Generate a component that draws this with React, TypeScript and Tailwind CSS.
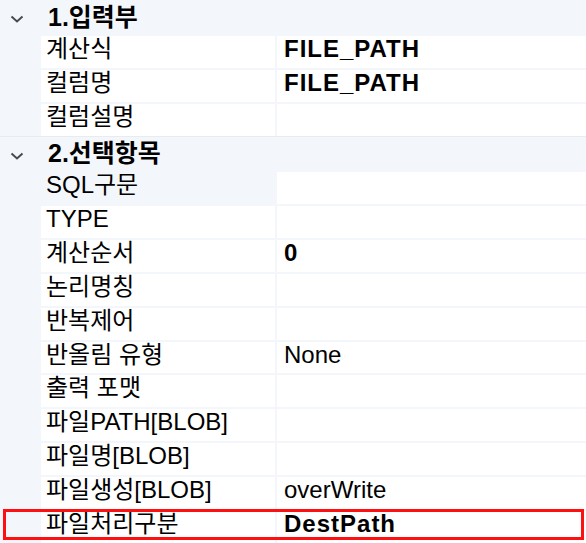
import React from "react";

type Row = { label: string; value?: string; bold?: boolean; dimLabel?: boolean; h?: string };

const groupOne: Row[] = [
  { label: "계산식", value: "FILE_PATH", bold: true },
  { label: "컬럼명", value: "FILE_PATH", bold: true },
  { label: "컬럼설명" },
];

const groupTwo: Row[] = [
  { label: "SQL구문", dimLabel: true },
  { label: "TYPE" },
  { label: "계산순서", value: "0", bold: true },
  { label: "논리명칭" },
  { label: "반복제어" },
  { label: "반올림 유형", value: "None", h: "h-[31px]" },
  { label: "출력 포맷" },
  { label: "파일PATH[BLOB]" },
  { label: "파일명[BLOB]" },
  { label: "파일생성[BLOB]", value: "overWrite" },
  { label: "파일처리구분", value: "DestPath", bold: true },
];

const font = { fontFamily: '"Liberation Sans", "Noto Sans CJK KR", sans-serif' };

function Chevron() {
  return (
    <svg width="16" height="10" viewBox="0 0 16 10" className="ml-[9px]">
      <path d="M2.5 2.5 L8 7.5 L13.5 2.5" fill="none" stroke="#4a4a4a" strokeWidth="2" />
    </svg>
  );
}

function GroupHeader({ title, className }: { title: string; className: string }) {
  return (
    <div className={`flex items-center ${className}`}>
      <div className="flex w-[41px] items-center pt-[2px]">
        <Chevron />
      </div>
      <span className="-mt-[3px] pl-[7px] text-[25px] font-bold leading-[26px] text-black">{title}</span>
    </div>
  );
}

function PropRow({ row }: { row: Row }) {
  return (
    <div className={`flex ${row.h ?? "h-[32px]"}`}>
      <div className="w-[41px] shrink-0" />
      <div
        className={`mr-[2px] w-[234px] shrink-0 pl-[5px] text-[24px] leading-[26px] text-black ${
          row.dimLabel ? "bg-[#f3f6fb]" : "bg-white"
        }`}
      >
        {row.label}
      </div>
      <div
        className={`flex-1 bg-white pl-[7px] text-[24px] leading-[26px] text-black ${
          row.bold ? "font-bold tracking-[1px]" : ""
        }`}
      >
        {row.value}
      </div>
    </div>
  );
}

export default function App() {
  return (
    <div className="relative h-[543px] w-[586px] overflow-hidden bg-[#f3f6fb]" style={font}>
      <GroupHeader title="1.입력부" className="h-[36px]" />
      <div className="flex flex-col gap-[2px]">
        {groupOne.map((r) => (
          <PropRow key={r.label} row={r} />
        ))}
      </div>
      <div className="h-px bg-[#e9ecef]" />
      <GroupHeader title="2.선택항목" className="h-[35px]" />
      <div className="flex flex-col gap-[2px]">
        {groupTwo.map((r) => (
          <PropRow key={r.label} row={r} />
        ))}
      </div>
      <div className="absolute left-[3px] top-[509px] h-[31px] w-[581px] border-[3px] border-[#ff1010]" />
    </div>
  );
}
